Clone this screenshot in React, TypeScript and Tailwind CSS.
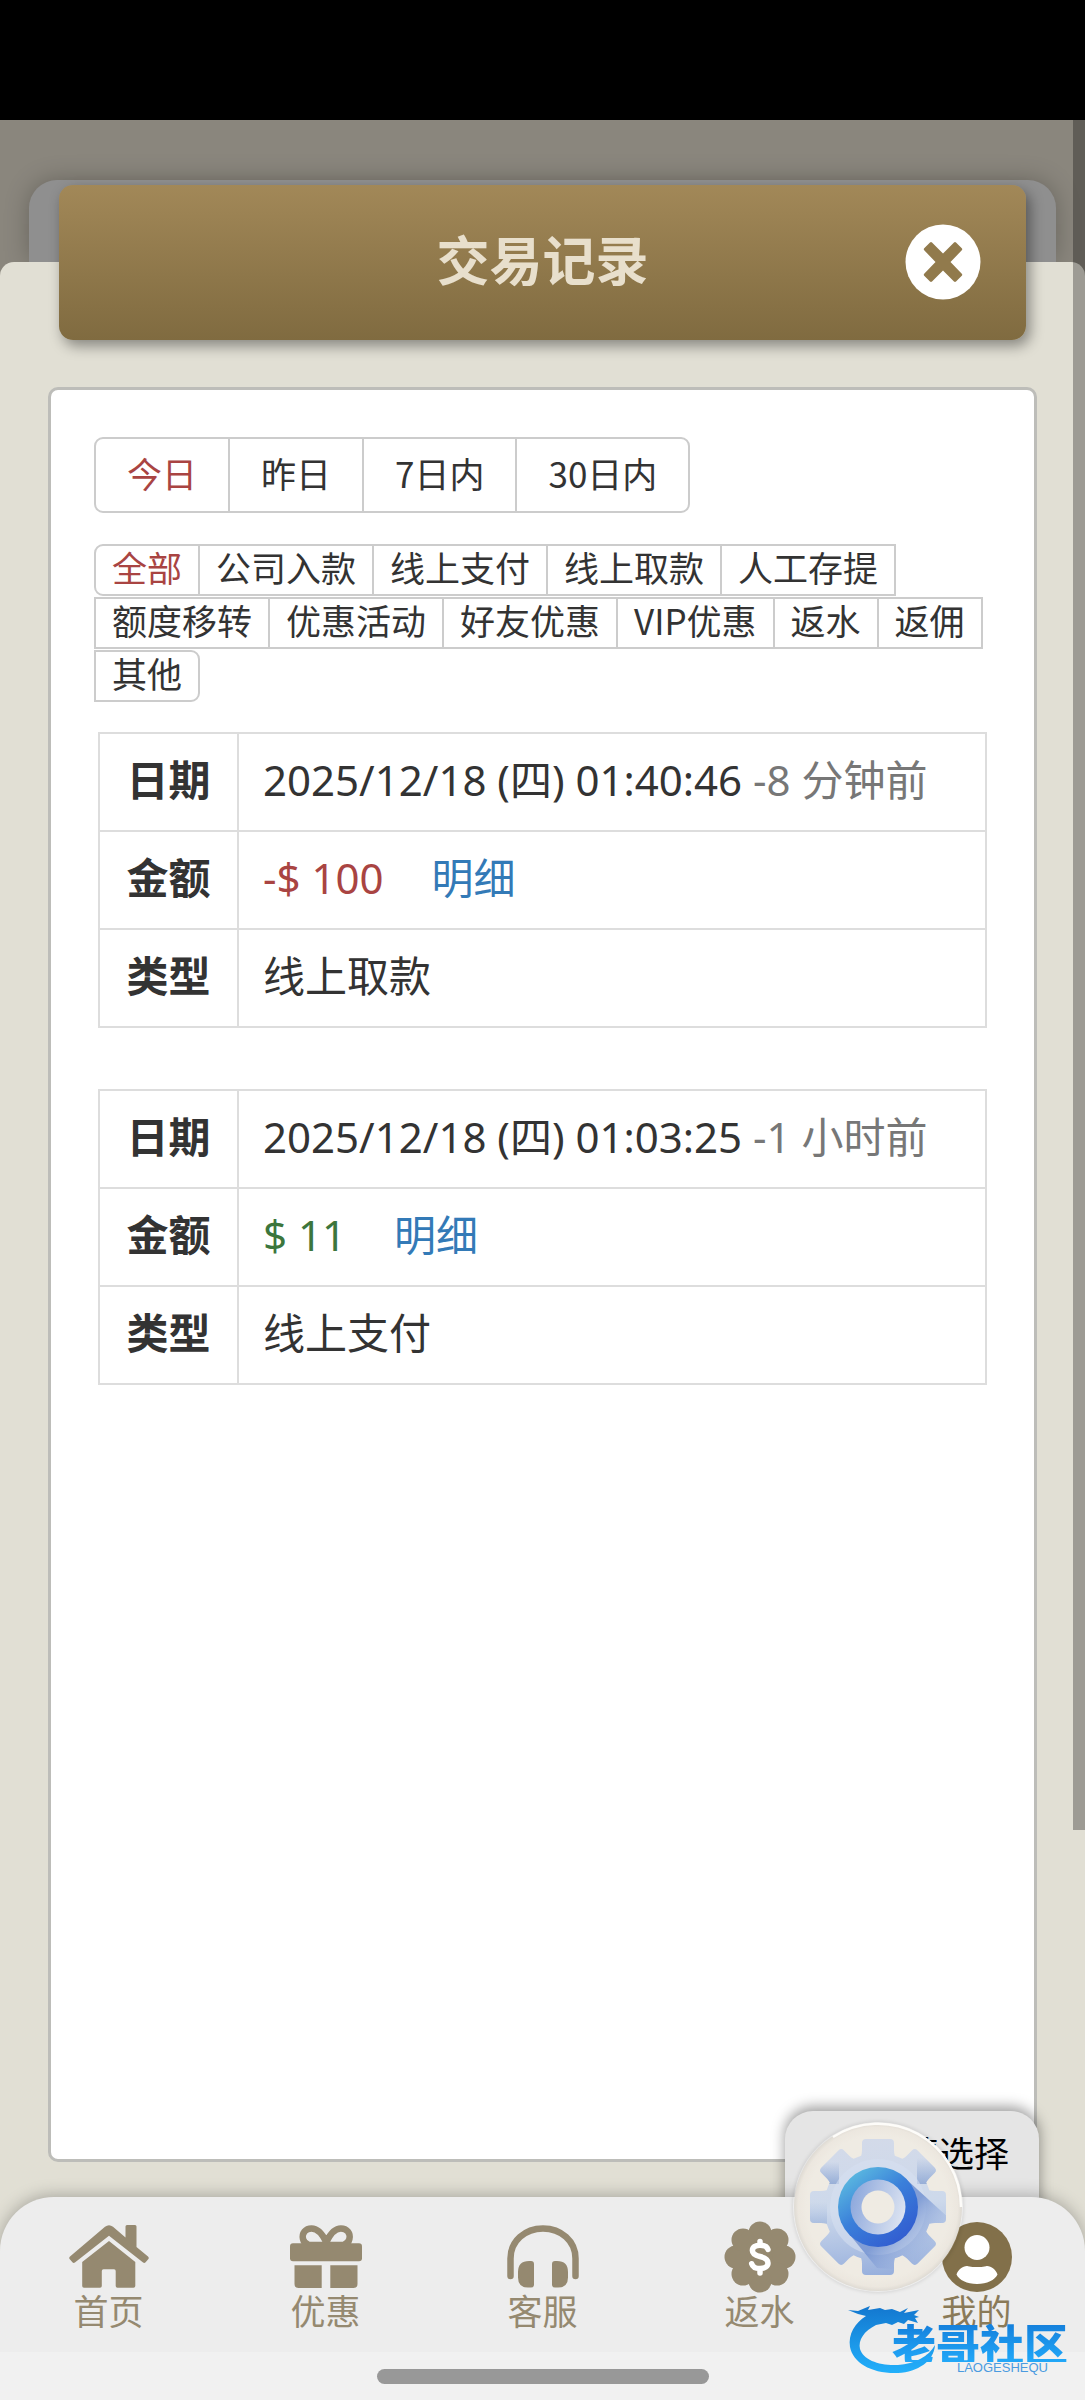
import { useState } from "react";
import type { ReactNode } from "react";

const dateRanges = ["今日", "昨日", "7日内", "30日内"];

const categories = [
  "全部",
  "公司入款",
  "线上支付",
  "线上取款",
  "人工存提",
  "额度移转",
  "优惠活动",
  "好友优惠",
  "VIP优惠",
  "返水",
  "返佣",
  "其他",
];

type Entry = {
  date: string;
  ago: string;
  amount: string;
  outgoing: boolean;
  kind: string;
};

const entries: Entry[] = [
  { date: "2025/12/18 (四) 01:40:46", ago: "-8 分钟前", amount: "-$ 100", outgoing: true, kind: "线上取款" },
  { date: "2025/12/18 (四) 01:03:25", ago: "-1 小时前", amount: "$ 11", outgoing: false, kind: "线上支付" },
];

function CloseIcon() {
  return (
    <svg viewBox="0 0 76 76" className="size-[76px]" aria-hidden="true">
      <circle cx="38" cy="38" r="37.5" fill="#fff" />
      <path
        d="M27 18.5 38 29.5 49 18.5q1-.8 2 0l5.800 5.800q.9 1 0 2L45.500 38 56.800 49.700q.9 1 0 2L51 57.500q-1 .8-2 0L38 46.500 27 57.500q-1 .8-2 0l-5.800-5.800q-.9-1 0-2L30.500 38 19.200 26.300q-.9-1 0-2L25 18.500q1-.8 2 0Z"
        fill="#917a4c"
      />
    </svg>
  );
}

function HomeIcon() {
  return (
    <svg viewBox="0 0 80 64" className="h-16 w-20" fill="currentColor" aria-hidden="true">
      <path d="M36 1.800Q40-1.500 44 1.800L56.500 12.500V1.500Q56.500 0 58 0h8q1.500 0 1.500 1.500V22L79 31.500q1.300 1.200.4 2.500l-2.800 3.300q-1.200 1.200-2.500.2L40 10.800 5.900 37.500q-1.300 1-2.500-.2L.6 34q-.9-1.300.4-2.500Z" />
      <path d="M40 16 66.300 37v24q0 1.800-1.800 1.800H48.500q-1.800 0-1.800-1.800V46q0-1.700-1.700-1.700H34.500q-1.700 0-1.700 1.700v15q0 1.800-1.800 1.800H15q-1.800 0-1.800-1.800V37Z" />
    </svg>
  );
}

function GiftIcon() {
  return (
    <svg viewBox="0 0 72 64" className="h-16 w-[72px]" fill="currentColor" aria-hidden="true">
      <path
        d="M36.300 17C32 8 27.500 3.400 21.500 3.400c-6 0-9.800 5-8.500 10.600.6 3 3 5 6 6h34.400c3-1 5.400-3 6-6 1.300-5.600-2.500-10.600-8.500-10.600-6 0-10.300 4.600-14.600 13.600Z"
        fill="none"
        stroke="currentColor"
        strokeWidth="6.500"
        strokeLinejoin="round"
      />
      <rect y="18.300" width="72" height="18" rx="3" />
      <path d="M4.500 40.300h27.200V63H8.500q-4 0-4-4ZM40.300 40.300h27.200V59q0 4-4 4H40.300Z" />
    </svg>
  );
}

function HeadphonesIcon() {
  return (
    <svg viewBox="0 0 72 64" className="h-16 w-[72px]" fill="currentColor" aria-hidden="true">
      <path
        d="M3.500 51V33.500C3.500 16 18 3.500 36 3.500S68.500 16 68.500 33.500V51"
        fill="none"
        stroke="currentColor"
        strokeWidth="6.500"
        strokeLinecap="round"
      />
      <path d="M22 36h2q3 0 3 3v20.500q0 3-3 3h-3q-10 0-10-10V47q0-11 11-11ZM50 36h-2q-3 0-3 3v20.500q0 3 3 3h3q10 0 10-10V47q0-11-11-11Z" />
    </svg>
  );
}

function RebateIcon() {
  const lobes = [
    [36, 12],
    [53, 19],
    [60, 36],
    [53, 53],
    [36, 60],
    [19, 53],
    [12, 36],
    [19, 19],
  ];
  return (
    <svg viewBox="0 0 72 72" className="size-[72px]" fill="currentColor" aria-hidden="true">
      <circle cx="36" cy="36" r="27" />
      {lobes.map(([cx, cy]) => (
        <circle key={`${cx}-${cy}`} cx={cx} cy={cy} r="11.500" />
      ))}
      <path
        d="M44 28.500c-1-3-4-4.300-8-4.300-4.600 0-7.600 2-7.600 5.300 0 3.800 3.300 5 7.600 6 4.600 1 8 2.300 8 6.500 0 3.500-3.300 5.500-8 5.500-4.300 0-7.300-1.500-8.300-4.800M36 20.500v3.500M36 47.500v4.500"
        fill="none"
        stroke="#fff"
        strokeWidth="5.500"
        strokeLinecap="round"
      />
    </svg>
  );
}

function ProfileIcon() {
  return (
    <svg viewBox="0 0 72 72" className="size-[72px]" aria-hidden="true">
      <circle cx="36" cy="36" r="35" fill="#82704a" />
      <circle cx="36" cy="26.500" r="12.500" fill="#fff" />
      <path d="M15.500 53.500c1.500-5 7-9 11.500-8.300 6 1.200 12 1.200 18 0 4.500-.7 10 3.300 11.500 8.300C54 59 46 63 36 63s-18-4-20.500-9.500Z" fill="#fff" />
    </svg>
  );
}

function GearIcon() {
  const angles = [0, 45, 90, 135, 180, 225, 270, 315];
  return (
    <svg viewBox="0 0 170 170" className="size-[170px]" aria-hidden="true">
      <defs>
        <linearGradient id="gear-face" x1="0.400" y1="0" x2="0.500" y2="1">
          <stop offset="0.100" stopColor="#d3dae9" />
          <stop offset="0.500" stopColor="#cdd9eb" />
          <stop offset="0.900" stopColor="#98b0dd" />
        </linearGradient>
        <linearGradient id="gear-ring" x1="0.100" y1="0.100" x2="0.800" y2="1">
          <stop offset="0" stopColor="#5cbbe0" />
          <stop offset="0.450" stopColor="#3a7fda" />
          <stop offset="1" stopColor="#3159cf" />
        </linearGradient>
        <linearGradient id="gear-inner" x1="0" y1="0.300" x2="1" y2="0.600">
          <stop offset="0" stopColor="#8ca7dc" />
          <stop offset="1" stopColor="#dde4f1" />
        </linearGradient>
        <linearGradient id="gear-shade" gradientUnits="userSpaceOnUse" x1="95" y1="95" x2="140" y2="140">
          <stop offset="0.150" stopColor="#6f8fd0" />
          <stop offset="1" stopColor="#b3c5e6" stopOpacity="0" />
        </linearGradient>
        <linearGradient id="gear-edge" x1="0" y1="0" x2="0" y2="1">
          <stop offset="0" stopColor="#7f9ccf" stopOpacity="0" />
          <stop offset="1" stopColor="#7f9ccf" />
        </linearGradient>
        <radialGradient id="gear-disc">
          <stop offset="0.850" stopColor="#efebe3" />
          <stop offset="0.950" stopColor="#ece7df" />
          <stop offset="1" stopColor="#dedad3" />
        </radialGradient>
        <clipPath id="gear-clip">
          <circle cx="85" cy="85" r="54" />
          {angles.map((a) => (
            <path key={a} d="M66 38q3-4 3-10V21q0-4 4-4h24q4 0 4 4v7q0 6 3 10Z" transform={`rotate(${a} 85 85)`} />
          ))}
        </clipPath>
      </defs>
      <circle cx="85" cy="85" r="84" fill="url(#gear-disc)" />
      <path d="M40 15A83 83 0 0 1 168 85" fill="none" stroke="#fdfcf9" strokeWidth="2.500" />
      <g clipPath="url(#gear-clip)">
        <rect width="170" height="170" fill="url(#gear-face)" />
        <rect x="24" y="40" width="22" height="22" fill="url(#gear-edge)" opacity="0.700" />
        <rect x="124" y="36" width="22" height="26" fill="url(#gear-edge)" opacity="0.700" />
        <rect x="14" y="80" width="20" height="24" fill="url(#gear-edge)" opacity="0.400" />
        <circle cx="85" cy="85" r="48" fill="#d5e0f0" opacity="0.600" />
        <path d="M113 57 158 98 146 150 84 146 57 113Z" fill="url(#gear-shade)" opacity="0.800" />
      </g>
      <circle cx="85" cy="85" r="40" fill="url(#gear-ring)" />
      <circle cx="85" cy="85" r="27.500" fill="url(#gear-inner)" />
      <circle cx="85" cy="85" r="16.500" fill="#efebe3" />
    </svg>
  );
}

function DragonMark() {
  return (
    <svg viewBox="0 0 92 68" className="h-[68px] w-[92px] shrink-0" aria-hidden="true">
      <defs>
        <linearGradient id="dragon" x1="0" y1="0" x2="0" y2="1">
          <stop offset="0" stopColor="#1377cf" />
          <stop offset="1" stopColor="#22b0fb" />
        </linearGradient>
      </defs>
      <path
        d="M0 4 10 5 22 0 20 4 32 2 37 4 44 3 52 6 60 2 56 7 71 4 66 9 71 11 67 12 70 17 60 14 56 18 50 16 44 19 38 17 28 19C16 25 10 34 12 43c3 11 20 17 38 16 17-1 31-9 37-20-1 16-17 27-37 28C24 68 5 57 2 41 0 28 7 17 18 10L10 8Z"
        fill="url(#dragon)"
      />
    </svg>
  );
}

type NavItemProps = { label: string; active?: boolean; children: ReactNode };

function NavItem({ label, active = false, children }: NavItemProps) {
  return (
    <a
      href="#"
      aria-current={active ? "page" : undefined}
      className={`flex flex-1 flex-col items-center text-[35px] leading-[34px] ${active ? "text-[#8a7a58]" : "text-[#958970]"}`}
    >
      <span className="flex h-[72px] items-center">{children}</span>
      <span>{label}</span>
    </a>
  );
}

function EntryTable({ entry }: { entry: Entry }) {
  const head = "h-[98px] w-[139px] border-2 border-[#ddd] pb-1 text-center font-bold";
  const cell = "h-[98px] border-2 border-[#ddd] px-6 pb-1";
  return (
    <table className="w-full border-collapse font-['Noto_Sans','Noto_Sans_CJK_SC',sans-serif] text-[42px] leading-[58px] text-[#333]">
      <tbody>
        <tr>
          <th scope="row" className={head}>日期</th>
          <td className={cell}>
            {entry.date} <span className="text-[#777]">{entry.ago}</span>
          </td>
        </tr>
        <tr>
          <th scope="row" className={head}>金额</th>
          <td className={cell}>
            <span className={entry.outgoing ? "text-[#a94442]" : "text-[#3c763d]"}>{entry.amount}</span>
            <a href="#" className="ml-12 text-[#337ab7]">明细</a>
          </td>
        </tr>
        <tr>
          <th scope="row" className={head}>类型</th>
          <td className={cell}>{entry.kind}</td>
        </tr>
      </tbody>
    </table>
  );
}

export default function App() {
  const [range, setRange] = useState("今日");
  const [category, setCategory] = useState("全部");

  return (
    <div className="flex min-h-screen flex-col bg-black pt-[120px] font-['Noto_Sans_CJK_SC','Noto_Sans',sans-serif]">
      <div className="relative flex flex-1 flex-col overflow-hidden bg-[#8a867d]">
        <div className="mx-[29px] mt-[60px] h-[82px] rounded-t-[28px] bg-[#8f8f8f] shadow-[0_0_24px_rgba(0,0,0,0.25)]" />

        <main className="relative flex flex-1 flex-col rounded-t-[14px] bg-[#e1dfd4]">
          <header className="mx-[59px] -mt-[77px] grid h-[155px] grid-cols-[1fr_auto_1fr] items-center rounded-[14px] bg-linear-to-b from-[#a28858] to-[#806b40] pb-0.5 shadow-[4px_6px_14px_rgba(0,0,0,0.4)]">
            <h1 className="col-start-2 pb-1.5 text-[53px] leading-none font-bold text-[#e8dfcc]">交易记录</h1>
            <button type="button" aria-label="关闭" className="mr-[45px] justify-self-end">
              <CloseIcon />
            </button>
          </header>

          <section className="mx-12 mt-[47px] mb-[35px] flex-1 rounded-[10px] border-3 border-[#bdbdb9] bg-white px-[43px] pt-[47px]">
            <div className="flex flex-wrap pl-0.5 text-[35px] leading-none">
              {dateRanges.map((name) => (
                <button
                  key={name}
                  type="button"
                  aria-pressed={range === name}
                  onClick={() => setRange(name)}
                  className={`-ml-0.5 h-[76px] border-2 border-[#ccc] px-[31px] pb-1.5 first:rounded-l-[9px] last:rounded-r-[9px] ${range === name ? "text-[#a94442]" : "text-[#333]"}`}
                >
                  {name}
                </button>
              ))}
            </div>

            <div className="mt-[31px] flex flex-wrap gap-y-px pl-0.5 text-[35px] leading-none">
              {categories.map((name) => (
                <button
                  key={name}
                  type="button"
                  aria-pressed={category === name}
                  onClick={() => setCategory(name)}
                  className={`-ml-0.5 h-[52px] border-2 border-[#ccc] px-4 pb-2 first:rounded-l-[9px] last:rounded-r-[9px] ${category === name ? "text-[#a94442]" : "text-[#333]"}`}
                >
                  {name}
                </button>
              ))}
            </div>

            <div className="mx-1 mt-[30px] flex flex-col gap-[61px]">
              {entries.map((entry) => (
                <EntryTable key={entry.date} entry={entry} />
              ))}
            </div>
          </section>

          <button
            type="button"
            className="absolute right-[46px] bottom-[180px] h-[109px] w-[254px] rounded-t-[28px] bg-[#e5e5e5] pr-[30px] pb-7 text-right text-[35px] leading-none text-black shadow-[0_-4px_14px_rgba(0,0,0,0.4)]"
          >
            请选择
          </button>

          <footer className="relative rounded-t-[54px] bg-[#ededed] shadow-[0_-2px_16px_rgba(0,0,0,0.25)]">
            <nav aria-label="主导航" className="flex h-[155px] pt-6">
              <NavItem label="首页"><HomeIcon /></NavItem>
              <NavItem label="优惠"><GiftIcon /></NavItem>
              <NavItem label="客服"><HeadphonesIcon /></NavItem>
              <NavItem label="返水"><RebateIcon /></NavItem>
              <NavItem label="我的" active><ProfileIcon /></NavItem>
            </nav>
            <div className="flex h-12 items-center justify-center bg-[#f1f1f1]">
              <div className="h-[15px] w-[332px] rounded-full bg-[#989898]" />
            </div>
          </footer>
        </main>

        <button type="button" aria-label="设置" className="absolute right-[122px] bottom-[108px] rounded-full shadow-[0_0_4px_rgba(0,0,0,0.15)]">
          <GearIcon />
        </button>

        <div className="pointer-events-none absolute right-[17px] bottom-[26px] flex">
          <DragonMark />
          <div className="-ml-12 flex flex-col items-end pt-[18px]">
            <span className="bg-linear-to-b from-[#1580dc] to-[#22a8f8] bg-clip-text text-[44px] leading-[38px] font-black text-transparent">老哥社区</span>
            <span className="mr-5 font-['Liberation_Sans',sans-serif] text-[13px] leading-3 text-[#4a9be0]">LAOGESHEQU</span>
          </div>
        </div>

        <div className="absolute top-0 right-0 h-3/4 w-3 bg-black/30" />
      </div>
    </div>
  );
}
